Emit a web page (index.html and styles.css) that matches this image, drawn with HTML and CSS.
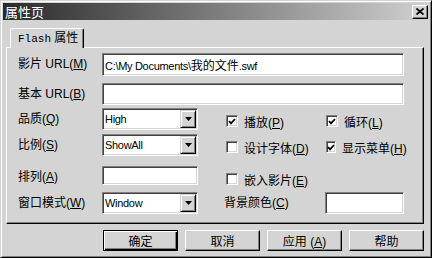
FILE: index.html
```html
<!DOCTYPE html>
<html>
<head>
  <meta charset="utf-8">
  <title>属性页</title>
  <link rel="stylesheet" href="styles.css">
</head>
<body>
<div class="window">
  <div class="title-bar">
    <span class="title">属性页</span>
    <button class="close-button">
      <svg width="8" height="7" viewBox="0 0 8 7"><path d="M0.5 0.5 L7.5 6.5 M7.5 0.5 L0.5 6.5" stroke="#000" stroke-width="1.7"/></svg>
    </button>
  </div>

  <div class="tabs">
    <div class="tab"><span class="mono">Flash</span> 属性</div>
  </div>

  <div class="panel">
    <div class="label">影片 URL(<u>M</u>)</div>
    <div class="field tall wide">C:\My Documents\<span class="cjk">我的文件</span>.swf</div>

    <div class="label">基本 URL(<u>B</u>)</div>
    <div class="field wide"></div>

    <div class="label">品质(<u>Q</u>)</div>
    <div class="field select"><span>High</span><span class="drop"><svg width="7" height="4" viewBox="0 0 7 4"><polygon points="0,0 7,0 3.5,4" fill="#000"/></svg></span></div>
    <div class="check c4"><span class="box"><svg width="8" height="7" viewBox="0 0 8 7"><path d="M1 3 L3 5.3 L7 1" stroke="#000" stroke-width="1.8" fill="none"/></svg></span><span>播放(<u>P</u>)</span></div>
    <div class="check c5"><span class="box"><svg width="8" height="7" viewBox="0 0 8 7"><path d="M1 3 L3 5.3 L7 1" stroke="#000" stroke-width="1.8" fill="none"/></svg></span><span>循环(<u>L</u>)</span></div>

    <div class="label">比例(<u>S</u>)</div>
    <div class="field select"><span>ShowAll</span><span class="drop"><svg width="7" height="4" viewBox="0 0 7 4"><polygon points="0,0 7,0 3.5,4" fill="#000"/></svg></span></div>
    <div class="check c4"><span class="box"></span><span>设计字体(<u>D</u>)</span></div>
    <div class="check c5"><span class="box"><svg width="8" height="7" viewBox="0 0 8 7"><path d="M1 3 L3 5.3 L7 1" stroke="#000" stroke-width="1.8" fill="none"/></svg></span><span>显示菜单(<u>H</u>)</span></div>

    <div class="label">排列(<u>A</u>)</div>
    <div class="field short"></div>
    <div class="check c4"><span class="box"></span><span>嵌入影片(<u>E</u>)</span></div>

    <div class="label">窗口模式(<u>W</u>)</div>
    <div class="field select"><span>Window</span><span class="drop"><svg width="7" height="4" viewBox="0 0 7 4"><polygon points="0,0 7,0 3.5,4" fill="#000"/></svg></span></div>
    <div class="label c4">背景颜色(<u>C</u>)</div>
    <div class="field color c5"></div>
  </div>

  <div class="buttons">
    <button class="button default">确定</button>
    <button class="button">取消</button>
    <button class="button">应用 (<u>A</u>)</button>
    <button class="button">帮助</button>
  </div>
</div>
</body>
</html>
```

FILE: styles.css
```css
body {
  margin: 0;
  background-color: #d4d4d4;
  font-family: "Liberation Sans", "Noto Sans CJK SC", sans-serif;
  font-size: 12px;
  color: #000;
}
.window {
  width: 432px;
  height: 258px;
  box-sizing: border-box;
  padding: 2px;
  background-color: #d4d4d4;
  border: 1px solid;
  border-color: #d4d4d4 #000 #000 #d4d4d4;
  box-shadow: inset 1px 1px #fff, inset -1px -1px #808080;
}
.title-bar {
  height: 17px;
  display: flex;
  align-items: center;
  justify-content: space-between;
  padding: 0 1px 0 2px;
  background: linear-gradient(to right, #2a2a2a, #d0d0d0);
}
.title {
  color: #fff;
  font-family: "Noto Sans CJK SC", sans-serif;
  font-size: 13px;
  line-height: 17px;
}
.close-button {
  width: 16px;
  height: 14px;
  padding: 0;
  display: flex;
  align-items: center;
  justify-content: center;
  background-color: #d4d4d4;
  border: 1px solid;
  border-color: #fff #000 #000 #fff;
  box-shadow: inset -1px -1px #808080;
}
.tabs {
  height: 27px;
  display: flex;
  align-items: flex-end;
  padding-left: 7px;
}
.tab {
  position: relative;
  z-index: 1;
  width: 74px;
  height: 20px;
  margin-bottom: -1px;
  box-sizing: border-box;
  padding-left: 7px;
  background-color: #d4d4d4;
  border-top: 1px solid #fff;
  border-left: 1px solid #fff;
  border-right: 1px solid #000;
  border-radius: 2px 2px 0 0;
  box-shadow: inset -1px 0 #808080;
  line-height: 18px;
}
.mono {
  font-family: "Liberation Mono", monospace;
  font-size: 11px;
}
.panel {
  width: 418px;
  height: 177px;
  margin-left: 3px;
  box-sizing: border-box;
  padding: 5px 0 0 11px;
  border: 1px solid;
  border-color: #fff #000 #000 #fff;
  box-shadow: inset -1px -1px #808080;
  display: grid;
  grid-template-columns: 84px 96px 26px 100px 80px;
  grid-template-rows: 30px 25px 26px 32px 26px 22px;
  align-items: start;
}
.label {
  grid-column: 1;
  line-height: 22px;
  white-space: nowrap;
}
.label:first-child {
  line-height: 23px;
}
.c4 {
  grid-column: 4;
}
.c5 {
  grid-column: 5;
}
.wide {
  grid-column: 2 / -1;
}
.field {
  height: 22px;
  box-sizing: border-box;
  padding-left: 2px;
  background-color: #fff;
  border: 1px solid;
  border-color: #808080 #fff #fff #808080;
  box-shadow: inset 1px 1px #404040, inset -1px -1px #d4d4d4;
  font-size: 11px;
  letter-spacing: -0.3px;
  line-height: 20px;
  white-space: nowrap;
}
.field.tall {
  height: 23px;
  line-height: 21px;
}
.field.short {
  height: 19px;
}
.cjk {
  font-family: "Noto Sans CJK SC", sans-serif;
  font-size: 12px;
  letter-spacing: 0;
}
.select {
  display: flex;
  justify-content: space-between;
  padding-right: 1px;
}
.drop {
  width: 16px;
  height: 18px;
  margin-top: 1px;
  box-sizing: border-box;
  display: flex;
  align-items: center;
  justify-content: center;
  background-color: #d4d4d4;
  border: 1px solid;
  border-color: #d4d4d4 #000 #000 #d4d4d4;
  box-shadow: inset 1px 1px #fff, inset -1px -1px #808080;
}
.color {
  margin-left: 1px;
}
.check {
  height: 22px;
  margin-top: 2px;
  padding-left: 2px;
  display: flex;
  align-items: center;
  gap: 6px;
  white-space: nowrap;
}
.box {
  width: 12px;
  height: 12px;
  box-sizing: border-box;
  display: flex;
  align-items: center;
  justify-content: center;
  background-color: #fff;
  border: 1px solid;
  border-color: #808080 #fff #fff #808080;
  box-shadow: inset 1px 1px #404040, inset -1px -1px #d4d4d4;
}
.buttons {
  display: flex;
  justify-content: flex-end;
  gap: 7px;
  margin-top: 6px;
  padding-right: 5px;
}
.button {
  width: 75px;
  height: 21px;
  padding: 0;
  background-color: #d4d4d4;
  border: 1px solid;
  border-color: #fff #000 #000 #fff;
  box-shadow: inset -1px -1px #808080;
  font-family: "Liberation Sans", "Noto Sans CJK SC", sans-serif;
  font-size: 12px;
  color: #000;
}
.button.default {
  border-color: #000;
  box-shadow: inset 1px 1px #fff, inset -1px -1px #000, inset -2px -2px #808080;
}
```
